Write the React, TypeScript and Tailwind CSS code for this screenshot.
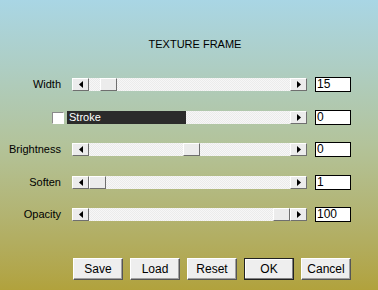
const bevel = "border border-t-white border-l-white border-r-[#6f6f6f] border-b-[#6f6f6f] bg-[#ececec]";
const trackBg = "bg-[repeating-conic-gradient(#f7f7f7_0%_25%,#ebebeb_0%_50%)] bg-[length:2px_2px]";

function ArrowBtn({ dir }: { dir: "left" | "right" }) {
  return (
    <div className={`w-[17px] h-full flex items-center justify-center shrink-0 ${bevel}`}>
      <svg width="4" height="7" viewBox="0 0 4 7">
        {dir === "left" ? <path d="M4 0 L0 3.5 L4 7 Z" fill="#000" /> : <path d="M0 0 L4 3.5 L0 7 Z" fill="#000" />}
      </svg>
    </div>
  );
}

function Thumb() {
  return <div className={`w-[17px] h-full shrink-0 ${bevel}`} />;
}

const sliders = [
  { label: "Width", offset: 11, value: "15" },
  { label: "Brightness", offset: 94, value: "0" },
  { label: "Soften", offset: 0, value: "1" },
  { label: "Opacity", offset: 184, value: "100" },
];

function ValueBox({ value }: { value: string }) {
  return (
    <div className="ml-[8px] w-[36px] h-[15px] bg-white border border-black text-[12px] leading-[13px] pl-[1px]">{value}</div>
  );
}

function SliderRow({ label, offset, value }: { label: string; offset: number; value: string }) {
  return (
    <div className="flex items-center h-[15px]">
      <div className="w-[61px] text-right text-[11px]">{label}</div>
      <div className={`ml-[11px] w-[235px] h-[13px] flex ${trackBg}`}>
        <ArrowBtn dir="left" />
        <div className="shrink-0" style={{ width: offset }} />
        <Thumb />
        <div className="flex-1" />
        <ArrowBtn dir="right" />
      </div>
      <ValueBox value={value} />
    </div>
  );
}

function StrokeRow() {
  return (
    <div className="flex items-center h-[15px]">
      <div className="w-[64px] flex justify-end">
        <div className="w-[12px] h-[12px] bg-white border border-t-[#8a8a8a] border-l-[#8a8a8a] border-r-white border-b-white" />
      </div>
      <div className={`ml-[3px] w-[240px] h-[13px] flex ${trackBg}`}>
        <div className="w-[119px] h-full bg-[#2b2b2b] text-white text-[11px] leading-[13px] pl-[2px]">Stroke</div>
        <div className="flex-1" />
        <ArrowBtn dir="right" />
      </div>
      <ValueBox value="0" />
    </div>
  );
}

function Btn({ label, def }: { label: string; def?: boolean }) {
  return (
    <div className={`w-[50px] h-[22px] flex items-center justify-center text-[12px] bg-[#eeeeee] border ${def ? "border-[#222] shadow-[inset_-1px_-1px_0_#808080,inset_1px_1px_0_#fff]" : "border-t-white border-l-white border-r-[#555] border-b-[#555] shadow-[inset_-1px_-1px_0_#a0a0a0]"}`}>
      {label}
    </div>
  );
}

export default function App() {
  return (
    <div className="w-[378px] h-[290px] bg-gradient-to-b from-[#a9d6e5] via-[#b3c39a] to-[#b1a23c] font-['Liberation_Sans',sans-serif] text-black overflow-hidden">
      <div className="pt-[37px] pl-[12px] text-center text-[11px] leading-[14px]">TEXTURE FRAME</div>
      <div className="mt-[26px] flex flex-col">
        <SliderRow {...sliders[0]} />
        <div className="mt-[18px]"><StrokeRow /></div>
        <div className="mt-[17px]"><SliderRow {...sliders[1]} /></div>
        <div className="mt-[18px]"><SliderRow {...sliders[2]} /></div>
        <div className="mt-[17px]"><SliderRow {...sliders[3]} /></div>
      </div>
      <div className="mt-[36px] ml-[73px] flex gap-[7px]">
        <Btn label="Save" />
        <Btn label="Load" />
        <Btn label="Reset" />
        <Btn label="OK" def />
        <Btn label="Cancel" />
      </div>
    </div>
  );
}
